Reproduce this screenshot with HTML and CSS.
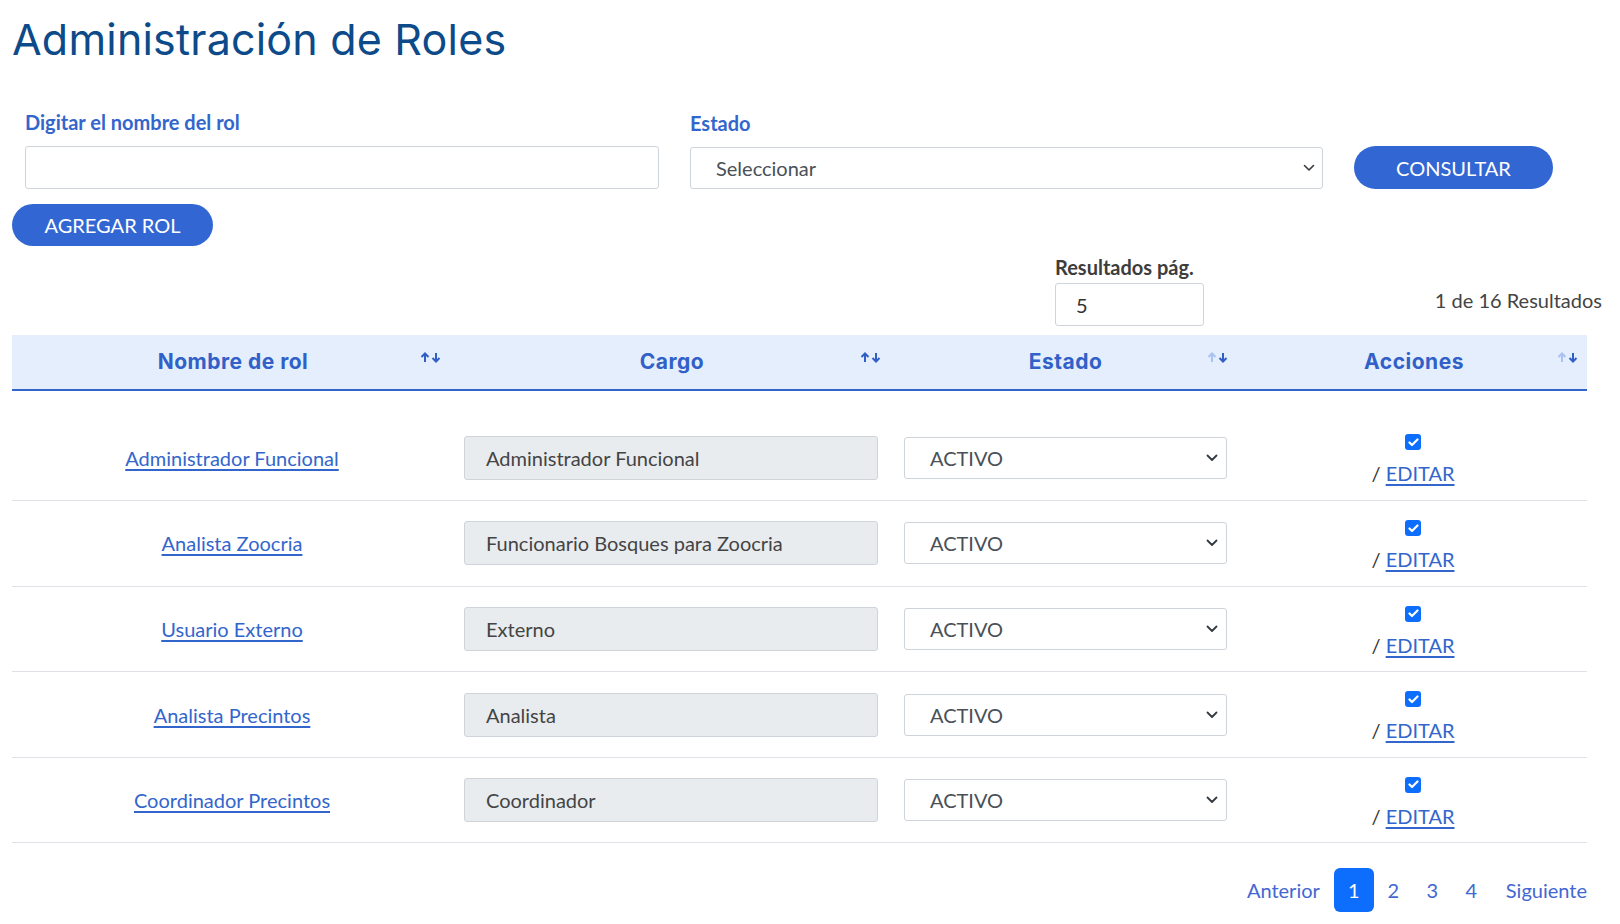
FILE: index.html
```html
<!DOCTYPE html>
<html lang="es">
<head>
<meta charset="utf-8">
<title>Administración de Roles</title>
<link rel="stylesheet" href="styles.css">
</head>
<body>
<div class="page">
  <h1 class="title">Administración de Roles</h1>

  <div class="filters">
    <div class="field">
      <label class="label">Digitar el nombre del rol</label>
      <div class="input"></div>
    </div>
    <div class="field">
      <label class="label">Estado</label>
      <div class="select"><span>Seleccionar</span><svg class="chev" width="12" height="8" viewBox="0 0 12 8"><path d="M1.5 1.5 6 6l4.5-4.5" fill="none" stroke="#343a40" stroke-width="1.6" stroke-linecap="round" stroke-linejoin="round"/></svg></div>
    </div>
    <button class="btn btn-consult">CONSULTAR</button>
  </div>

  <button class="btn btn-add">AGREGAR ROL</button>

  <div class="results-bar">
    <div class="per-page">
      <label class="per-label">Resultados pág.</label>
      <div class="input input-small">5</div>
    </div>
    <div class="count">1 de 16 Resultados</div>
  </div>

  <table class="roles">
    <thead>
      <tr>
        <th class="c1"><span class="th-in">Nombre de rol<svg class="sort" width="22" height="11" viewBox="0 0 22 11"><path d="M5 10V1.5M1.5 5 5 1.5 8.5 5" fill="none" stroke="#2f5fc6" stroke-width="2"/><path d="M16 1v8.5M12.5 6 16 9.5 19.5 6" fill="none" stroke="#2f5fc6" stroke-width="2"/></svg></span></th>
        <th class="c2"><span class="th-in">Cargo<svg class="sort" width="22" height="11" viewBox="0 0 22 11"><path d="M5 10V1.5M1.5 5 5 1.5 8.5 5" fill="none" stroke="#2f5fc6" stroke-width="2"/><path d="M16 1v8.5M12.5 6 16 9.5 19.5 6" fill="none" stroke="#2f5fc6" stroke-width="2"/></svg></span></th>
        <th class="c3"><span class="th-in">Estado<svg class="sort" width="22" height="11" viewBox="0 0 22 11"><path d="M5 10V1.5M1.5 5 5 1.5 8.5 5" fill="none" stroke="#a8c3f3" stroke-width="2"/><path d="M16 1v8.5M12.5 6 16 9.5 19.5 6" fill="none" stroke="#2f5fc6" stroke-width="2"/></svg></span></th>
        <th class="c4"><span class="th-in">Acciones<svg class="sort" width="22" height="11" viewBox="0 0 22 11"><path d="M5 10V1.5M1.5 5 5 1.5 8.5 5" fill="none" stroke="#a8c3f3" stroke-width="2"/><path d="M16 1v8.5M12.5 6 16 9.5 19.5 6" fill="none" stroke="#2f5fc6" stroke-width="2"/></svg></span></th>
      </tr>
    </thead>
    <tbody>
      <tr class="spacer"><td colspan="4"></td></tr>
      <tr>
        <td class="name"><a href="#">Administrador Funcional</a></td>
        <td><div class="input input-ro">Administrador Funcional</div></td>
        <td class="c-state"><div class="select select-row"><span>ACTIVO</span><svg class="chev" width="12" height="8" viewBox="0 0 12 8"><path d="M1.5 1.5 6 6l4.5-4.5" fill="none" stroke="#343a40" stroke-width="1.8" stroke-linecap="round" stroke-linejoin="round"/></svg></div></td>
        <td class="actions"><span class="check"><svg width="11" height="9" viewBox="0 0 11 9"><path d="M1.5 4.5 4 7l5.5-5.5" fill="none" stroke="#fff" stroke-width="2.2" stroke-linecap="round" stroke-linejoin="round"/></svg></span><span class="edit-line">/ <a href="#">EDITAR</a></span></td>
      </tr>
      <tr>
        <td class="name"><a href="#">Analista Zoocria</a></td>
        <td><div class="input input-ro">Funcionario Bosques para Zoocria</div></td>
        <td class="c-state"><div class="select select-row"><span>ACTIVO</span><svg class="chev" width="12" height="8" viewBox="0 0 12 8"><path d="M1.5 1.5 6 6l4.5-4.5" fill="none" stroke="#343a40" stroke-width="1.8" stroke-linecap="round" stroke-linejoin="round"/></svg></div></td>
        <td class="actions"><span class="check"><svg width="11" height="9" viewBox="0 0 11 9"><path d="M1.5 4.5 4 7l5.5-5.5" fill="none" stroke="#fff" stroke-width="2.2" stroke-linecap="round" stroke-linejoin="round"/></svg></span><span class="edit-line">/ <a href="#">EDITAR</a></span></td>
      </tr>
      <tr>
        <td class="name"><a href="#">Usuario Externo</a></td>
        <td><div class="input input-ro">Externo</div></td>
        <td class="c-state"><div class="select select-row"><span>ACTIVO</span><svg class="chev" width="12" height="8" viewBox="0 0 12 8"><path d="M1.5 1.5 6 6l4.5-4.5" fill="none" stroke="#343a40" stroke-width="1.8" stroke-linecap="round" stroke-linejoin="round"/></svg></div></td>
        <td class="actions"><span class="check"><svg width="11" height="9" viewBox="0 0 11 9"><path d="M1.5 4.5 4 7l5.5-5.5" fill="none" stroke="#fff" stroke-width="2.2" stroke-linecap="round" stroke-linejoin="round"/></svg></span><span class="edit-line">/ <a href="#">EDITAR</a></span></td>
      </tr>
      <tr>
        <td class="name"><a href="#">Analista Precintos</a></td>
        <td><div class="input input-ro">Analista</div></td>
        <td class="c-state"><div class="select select-row"><span>ACTIVO</span><svg class="chev" width="12" height="8" viewBox="0 0 12 8"><path d="M1.5 1.5 6 6l4.5-4.5" fill="none" stroke="#343a40" stroke-width="1.8" stroke-linecap="round" stroke-linejoin="round"/></svg></div></td>
        <td class="actions"><span class="check"><svg width="11" height="9" viewBox="0 0 11 9"><path d="M1.5 4.5 4 7l5.5-5.5" fill="none" stroke="#fff" stroke-width="2.2" stroke-linecap="round" stroke-linejoin="round"/></svg></span><span class="edit-line">/ <a href="#">EDITAR</a></span></td>
      </tr>
      <tr>
        <td class="name"><a href="#">Coordinador Precintos</a></td>
        <td><div class="input input-ro">Coordinador</div></td>
        <td class="c-state"><div class="select select-row"><span>ACTIVO</span><svg class="chev" width="12" height="8" viewBox="0 0 12 8"><path d="M1.5 1.5 6 6l4.5-4.5" fill="none" stroke="#343a40" stroke-width="1.8" stroke-linecap="round" stroke-linejoin="round"/></svg></div></td>
        <td class="actions"><span class="check"><svg width="11" height="9" viewBox="0 0 11 9"><path d="M1.5 4.5 4 7l5.5-5.5" fill="none" stroke="#fff" stroke-width="2.2" stroke-linecap="round" stroke-linejoin="round"/></svg></span><span class="edit-line">/ <a href="#">EDITAR</a></span></td>
      </tr>
    </tbody>
  </table>

  <nav class="pager">
    <a href="#" class="pg pg-prev">Anterior</a>
    <a href="#" class="pg pg-num active">1</a>
    <a href="#" class="pg pg-num">2</a>
    <a href="#" class="pg pg-num">3</a>
    <a href="#" class="pg pg-num">4</a>
    <a href="#" class="pg pg-next">Siguiente</a>
  </nav>
</div>
</body>
</html>
```
FILE: styles.css
```css
* { box-sizing: border-box; }
html, body { margin: 0; padding: 0; background: #fff; }
body {
  font-family: Lato, "Liberation Sans", sans-serif;
  font-size: 20px;
  color: #495057;
}
.page { width: 1620px; padding: 0 18px 0 12px; }

.title {
  margin: 0;
  padding-top: 14px;
  height: 80px;
  font-family: Inter, "Noto Sans", sans-serif;
  font-weight: 400;
  font-size: 43px;
  line-height: 50px;
  color: #0c4a8a;
  letter-spacing: 0.2px;
}

.filters {
  display: grid;
  grid-template-columns: 634px 633px 199px;
  column-gap: 31px;
  align-items: end;
  padding-left: 13px;
  margin-top: 30px;
}
.field { display: flex; flex-direction: column; }
.label {
  font-weight: 700;
  color: #3366cc;
  font-size: 20px;
  line-height: 24px;
  margin-bottom: 12px;
}
.input {
  height: 43px;
  border: 1px solid #ced4da;
  border-radius: 3px;
  background: #fff;
  padding: 0 26px;
  display: flex;
  align-items: center;
  font-size: 20px;
  color: #495057;
}
.select {
  height: 42px;
  border: 1px solid #ced4da;
  border-radius: 3px;
  background: #fff;
  padding: 0 7px 0 25px;
  display: flex;
  align-items: center;
  justify-content: space-between;
  color: #495057;
  font-size: 20px;
}
.chev { flex: none; }

.btn {
  border: none;
  background: #3267d3;
  color: #fff;
  font-family: Lato, "Liberation Sans", sans-serif;
  font-size: 20px;
  height: 43px;
  border-radius: 22px;
  padding: 0;
  cursor: pointer;
}
.btn-consult { width: 199px; }
.btn-add { width: 201px; height: 42px; margin-top: 15px; display: block; }

.results-bar {
  display: flex;
  justify-content: space-between;
  align-items: center;
  padding-left: 1043px;
  margin-top: 9px;
}
.per-page { display: flex; flex-direction: column; }
.per-label { font-size: 20px; line-height: 24px; color: #3d3d3d; font-weight: 700; margin-bottom: 4px; }
.input-small { width: 149px; height: 43px; padding: 0 20px; color: #333; }
.count { color: #444; font-size: 20px; margin-top: 18px; }

.roles {
  width: 1575px;
  border-collapse: collapse;
  margin-top: 9px;
  table-layout: fixed;
}
.roles th {
  background: #e4eefc;
  height: 55px;
  border-bottom: 2px solid #3265c9;
  padding: 0 8px 0 12px;
  font-family: Inter, "Noto Sans", sans-serif;
  font-weight: 700;
  font-size: 21px;
  letter-spacing: 0.5px;
  color: #3060c8;
  vertical-align: middle;
}
.th-in {
  display: flex;
  align-items: center;
  justify-content: center;
  position: relative;
  width: 100%;
  line-height: 26px;
}
.sort { position: absolute; right: 0; top: 3px; }
.c1 { width: 438px; }
.c2 { width: 440px; }
.c3 { width: 347px; }
.c4 { width: 350px; }

.roles tr.spacer td { height: 25px; padding: 0; border: none; }
.roles td {
  height: 85.6px;
  padding: 0 12px 0 14px;
  border-bottom: 1px solid #dee2e6;
  vertical-align: middle;
  text-align: center;
}
.roles td.c-state { padding-right: 10px; }
.roles a { color: #3366cc; text-decoration: underline; text-underline-offset: 3px; }
.input-ro {
  background: #e9ecef;
  height: 44px;
  padding: 0 21px;
  text-align: left;
  color: #444;
}
.select-row { height: 42px; text-align: left; padding-right: 8px; }

.roles td.actions { vertical-align: top; padding-top: 19px; line-height: 24px; }
.check {
  width: 16px;
  height: 16px;
  margin: 0 auto 11px;
  background: #0d6efd;
  border-radius: 3px;
  display: flex;
  align-items: center;
  justify-content: center;
}
.edit-line { display: block; color: #333; }

.pager {
  width: 1575px;
  display: flex;
  justify-content: flex-end;
  align-items: center;
  margin-top: 25px;
}
.pg {
  color: #4267d2;
  text-decoration: none;
  font-size: 20px;
  height: 44px;
  display: flex;
  align-items: center;
  justify-content: center;
}
.pg-prev { margin-right: 14px; }
.pg-num { width: 39px; }
.pg-next { margin-left: 15px; }
.pg.active {
  background: #0d6efd;
  color: #fff;
  border-radius: 6px;
  width: 40px;
}
```
